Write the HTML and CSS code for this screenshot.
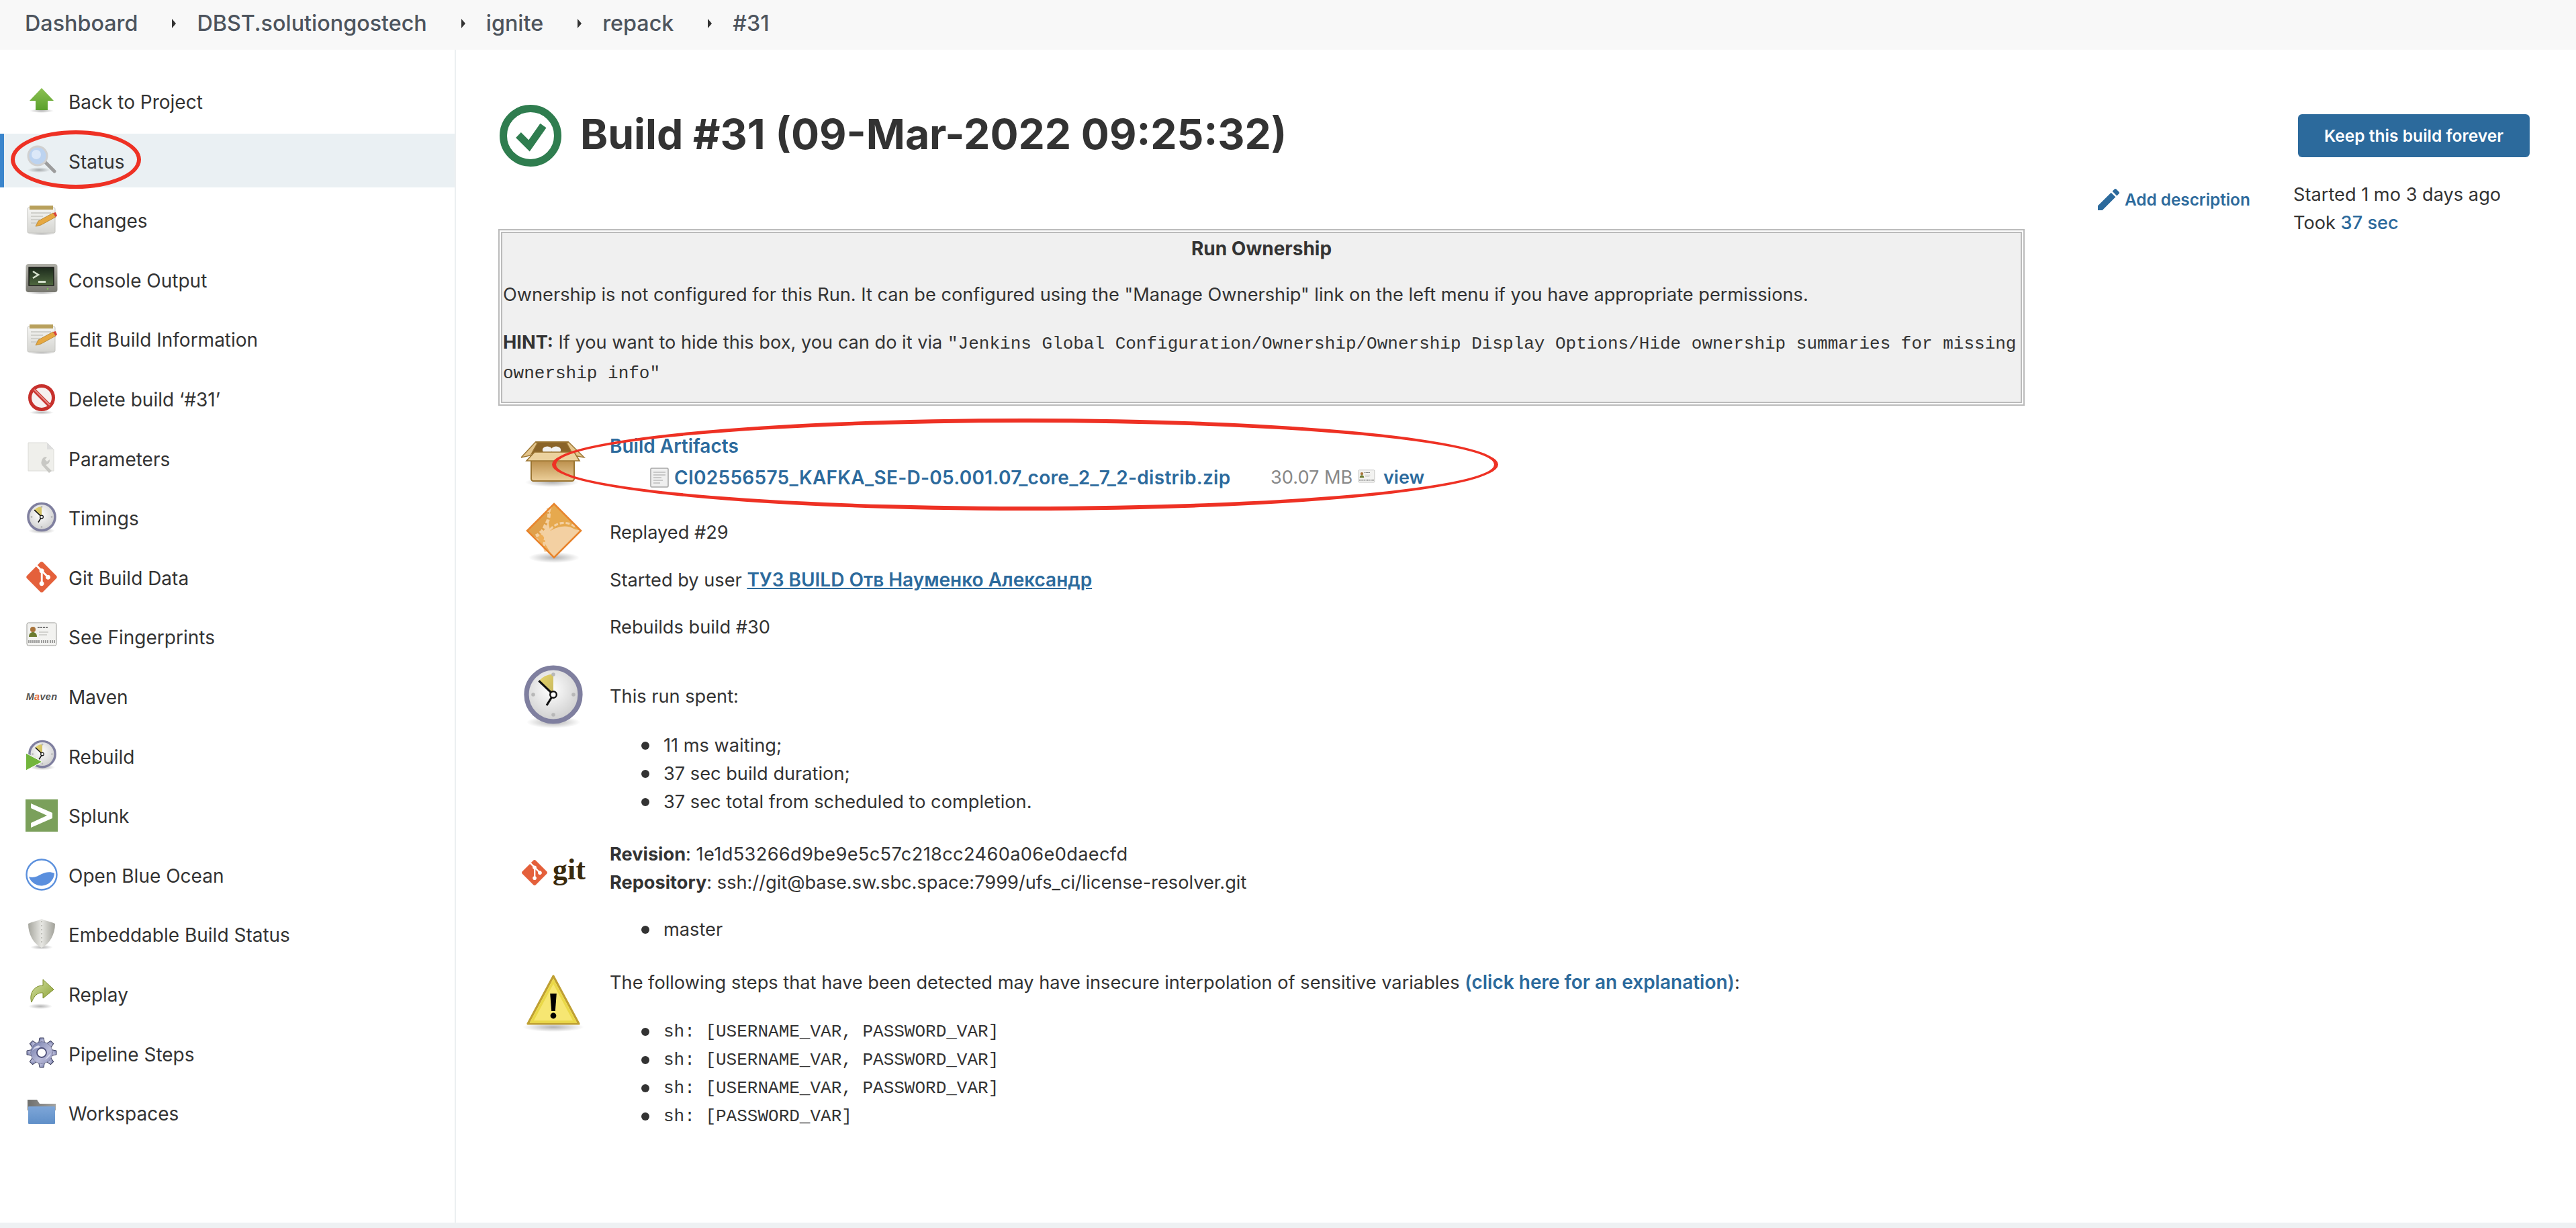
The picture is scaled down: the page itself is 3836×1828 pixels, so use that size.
FILE: index.html
```html
<!DOCTYPE html>
<html lang="en">
<head>
<meta charset="utf-8">
<title>Build #31</title>
<link rel="stylesheet" href="styles.css">
</head>
<body>
<svg class="defs" width="0" height="0" aria-hidden="true">
  <defs>
    <linearGradient id="gGreen" x1="0" y1="0" x2="0" y2="1"><stop offset="0" stop-color="#8cc152"/><stop offset="1" stop-color="#5aa02c"/></linearGradient>
    <linearGradient id="gGrey" x1="0" y1="0" x2="0" y2="1"><stop offset="0" stop-color="#f6f6f4"/><stop offset="1" stop-color="#d4d4d0"/></linearGradient>
    <linearGradient id="gShield" x1="0" y1="0" x2="1" y2="0"><stop offset="0" stop-color="#a6a69e"/><stop offset=".5" stop-color="#e8e8e4"/><stop offset="1" stop-color="#a0a098"/></linearGradient>
    <linearGradient id="gBlue" x1="0" y1="0" x2="0" y2="1"><stop offset="0" stop-color="#7ea6d8"/><stop offset="1" stop-color="#5f8fc8"/></linearGradient>
    <linearGradient id="gFolderBack" x1="0" y1="0" x2="1" y2="0"><stop offset="0" stop-color="#6e6e6c"/><stop offset="1" stop-color="#a4a4a2"/></linearGradient>
    <linearGradient id="gConsole" x1="0" y1="0" x2="0" y2="1"><stop offset="0" stop-color="#b0b0a8"/><stop offset="1" stop-color="#77776f"/></linearGradient>
    <linearGradient id="gScreen" x1="0" y1="0" x2="0" y2="1"><stop offset="0" stop-color="#1c2a1c"/><stop offset="1" stop-color="#4f683f"/></linearGradient>
    <linearGradient id="gGear" x1="0" y1="0" x2="1" y2="1"><stop offset="0" stop-color="#6f78a8"/><stop offset=".6" stop-color="#b8bad8"/><stop offset="1" stop-color="#8f92bc"/></linearGradient>
    <linearGradient id="gReplay" x1="0" y1="0" x2="1" y2="1"><stop offset="0" stop-color="#d6e2a8"/><stop offset="1" stop-color="#8aa030"/></linearGradient>
    <linearGradient id="gBox" x1="0" y1="0" x2="0" y2="1"><stop offset="0" stop-color="#b98c48"/><stop offset="1" stop-color="#eccf9a"/></linearGradient>
    <linearGradient id="gWedge" x1="0" y1="0" x2="1" y2="1"><stop offset="0" stop-color="#e6d56a"/><stop offset="1" stop-color="#c8b860"/></linearGradient>
    <radialGradient id="gFace" cx=".45" cy=".4" r=".7"><stop offset="0" stop-color="#ffffff"/><stop offset="1" stop-color="#c6c6c6"/></radialGradient>
    <radialGradient id="gShadow"><stop offset="0" stop-color="#000" stop-opacity=".3"/><stop offset="1" stop-color="#000" stop-opacity="0"/></radialGradient>
    <clipPath id="clipDiamond"><polygon points="24.5,3 44.5,23 24.5,43 4.5,23"/></clipPath>

    <symbol id="i-up" viewBox="0 0 48 48">
      <ellipse cx="24" cy="38" rx="18" ry="3" fill="url(#gShadow)"/>
      <polygon points="24,4 42,23 33,23 33,37 15,37 15,23 6,23" fill="url(#gGreen)"/>
    </symbol>
    <symbol id="i-search" viewBox="0 0 48 48">
      <ellipse cx="20" cy="38" rx="17" ry="4" fill="url(#gShadow)"/>
      <line x1="30" y1="27" x2="43" y2="40" stroke="#9c9c9c" stroke-width="5" stroke-linecap="round"/>
      <circle cx="18" cy="17" r="14" fill="#bcd3f0" stroke="#d0d0d0" stroke-width="3"/>
      <circle cx="16" cy="15" r="7" fill="#dce8f8"/>
    </symbol>
    <symbol id="i-note" viewBox="0 0 48 48">
      <ellipse cx="24" cy="44" rx="20" ry="2.5" fill="url(#gShadow)"/>
      <rect x="3" y="5" width="41" height="38" rx="2" fill="url(#gGrey)" stroke="#c4c4c0"/>
      <rect x="6" y="2" width="35" height="6" fill="#b8a05c"/>
      <path d="M8 13h30M8 18h18M8 23h14M8 28h12" stroke="#cfcfca" stroke-width="2"/>
      <polygon points="15,33 19,25 41,13 45,19 23,31" fill="#e6a842" stroke="#a87a24" stroke-width=".7"/>
      <polygon points="41,13 45,19 47,17 45,12" fill="#d8443a"/>
    </symbol>
    <symbol id="i-console" viewBox="0 0 48 48">
      <ellipse cx="24" cy="44" rx="22" ry="2.5" fill="url(#gShadow)"/>
      <rect x="0.5" y="1" width="47" height="42" rx="4" fill="url(#gConsole)"/>
      <rect x="5" y="6" width="37" height="27" fill="url(#gScreen)" stroke="#1a1a18" stroke-width="1.4"/>
      <path d="M11 12l8 5-8 5" stroke="#d4e0cc" stroke-width="2.6" fill="none"/>
      <rect x="19" y="26" width="11" height="3" fill="#d4e0cc"/>
      <circle cx="33" cy="38" r="1.2" fill="#7cc850"/>
    </symbol>
    <symbol id="i-delete" viewBox="0 0 48 48">
      <ellipse cx="24" cy="44" rx="18" ry="3" fill="url(#gShadow)"/>
      <circle cx="24" cy="22" r="17.5" fill="#f6f0f0" stroke="#c6302c" stroke-width="5"/>
      <line x1="11.5" y1="9.5" x2="36.5" y2="34.5" stroke="#cc3a36" stroke-width="5.5"/>
      <line x1="13" y1="10" x2="36" y2="33" stroke="#eaa09c" stroke-width="1.4"/>
    </symbol>
    <symbol id="i-params" viewBox="0 0 48 48">
      <path d="M4 1h28l10 10v32H4z" fill="#efefeb" stroke="#dcdcd8"/>
      <path d="M32 1v10h10" fill="#dddddd"/>
      <path d="M24 28a7 7 0 0 1 8-6l-3 4 3 3 4-3a7 7 0 0 1-6 8l9 9-4 3-9-10a7 7 0 0 1-2-8z" fill="#c8c8c4"/>
    </symbol>
    <symbol id="i-clock" viewBox="0 0 48 48">
      <ellipse cx="24" cy="43" rx="20" ry="4.5" fill="url(#gShadow)"/>
      <circle cx="24" cy="22.5" r="20" fill="url(#gFace)" stroke="#7f7f9f" stroke-width="3.6"/>
      <path d="M24 22.5L13.2 12.2A15 15 0 0 1 24 7.2z" fill="url(#gWedge)"/>
      <circle cx="24" cy="7.5" r="1.4" fill="#b8b8b8"/><circle cx="39" cy="22.5" r="1.4" fill="#b8b8b8"/><circle cx="24" cy="37.5" r="1.4" fill="#b8b8b8"/><circle cx="9" cy="22.5" r="1.4" fill="#b8b8b8"/>
      <path d="M13.2 12.2L24 22.5L19 30.5" stroke="#111" stroke-width="1.6" fill="none"/>
      <circle cx="24" cy="22.5" r="2.4" fill="#fff" stroke="#111" stroke-width="1.2"/>
    </symbol>
    <symbol id="i-git" viewBox="0 0 97 97">
      <path fill="#e4603b" d="M92.71 44.408L52.591 4.291c-2.31-2.311-6.057-2.311-8.369 0l-8.33 8.332L46.459 23.19c2.456-.83 5.272-.273 7.229 1.685 1.969 1.97 2.521 4.81 1.67 7.275l10.186 10.185c2.465-.85 5.307-.3 7.275 1.671 2.75 2.75 2.75 7.206 0 9.958-2.752 2.751-7.208 2.751-9.961 0-2.068-2.07-2.58-5.11-1.531-7.658l-9.5-9.499v24.997c.67.332 1.303.774 1.861 1.332 2.75 2.75 2.75 7.206 0 9.959-2.75 2.749-7.209 2.749-9.957 0-2.75-2.754-2.75-7.21 0-9.959.68-.679 1.467-1.193 2.307-1.537v-25.23c-.84-.344-1.625-.853-2.307-1.537-2.083-2.082-2.584-5.14-1.516-7.698L31.798 16.715 4.288 44.222c-2.311 2.313-2.311 6.06 0 8.371l40.121 40.118c2.31 2.311 6.056 2.311 8.369 0L92.71 52.779c2.311-2.311 2.311-6.06 0-8.371z"/>
    </symbol>
    <symbol id="i-card" viewBox="0 0 48 48">
      <rect x="2" y="3" width="44" height="34" rx="2.5" fill="#f2f2f0" stroke="#9a9a96"/>
      <circle cx="11" cy="13" r="4" fill="#a8743c"/>
      <path d="M5 24c0-5 3-7 6-7s6 2 6 7z" fill="#6c7c30"/>
      <path d="M20 17h14M20 21h12" stroke="#c8c8c4" stroke-width="1.4"/>
      <path d="M18 10h16" stroke="#777" stroke-width="2" stroke-dasharray="3 1"/>
      <path d="M5 29v4M8 29v4M11 29v4M14 29v4M17 29v4M20 29v4M24 29v4M27 29v4M30 29v4M33 29v4M37 29v4M40 29v4M43 29v4" stroke="#666" stroke-width="1.2"/>
    </symbol>
    <symbol id="i-maven" viewBox="0 0 48 48">
      <text x="24" y="29" text-anchor="middle" class="maven-text">M<tspan class="maven-a">a</tspan>ven</text>
    </symbol>
    <symbol id="i-rebuild" viewBox="0 0 48 48">
      <use href="#i-clock" width="46" height="46" x="2" y="0"/>
      <polygon points="0.5,20 25,33 0.5,46" fill="#72b53c" stroke="#fff" stroke-width="1"/>
    </symbol>
    <symbol id="i-splunk" viewBox="0 0 48 48">
      <rect width="48" height="48" fill="#7ba05b"/>
      <polygon points="8,6 40,20 40,28 8,42 8,35 32,24 8,13" fill="#fff"/>
    </symbol>
    <symbol id="i-ocean" viewBox="0 0 48 48">
      <circle cx="24" cy="24" r="22.5" fill="#fff" stroke="#5b90dd" stroke-width="2.4"/>
      <path d="M5 27C12 30 18 26 24 23C30 20 37 19 43 22A19.5 19.5 0 0 1 5 27z" fill="#5a8fde"/>
    </symbol>
    <symbol id="i-shield" viewBox="0 0 48 48">
      <ellipse cx="24" cy="43" rx="17" ry="3.5" fill="url(#gShadow)"/>
      <path d="M24 1C30 4 38 5 44 8C44 24 36 38 24 44C12 38 4 24 4 8C10 5 18 4 24 1z" fill="url(#gShield)"/>
      <path d="M24 4v36" stroke="#b0b0a8" stroke-width="1.4" stroke-dasharray="2 4"/>
    </symbol>
    <symbol id="i-replay" viewBox="0 0 48 48">
      <ellipse cx="22" cy="42" rx="18" ry="4" fill="url(#gShadow)"/>
      <path d="M9 36C5 24 12 11 26 11L26 2L42 17L26 30L26 22C18 21 13 26 9 36z" fill="url(#gReplay)" stroke="#7c8c2a"/>
    </symbol>
    <symbol id="i-gear" viewBox="0 0 48 48">
      <g fill="url(#gGear)" stroke="#3c3e5c" stroke-width="1">
        <polygon points="19.5,9 21,1 27,1 28.5,9"/>
        <polygon points="19.5,9 21,1 27,1 28.5,9" transform="rotate(45 24 23)"/>
        <polygon points="19.5,9 21,1 27,1 28.5,9" transform="rotate(90 24 23)"/>
        <polygon points="19.5,9 21,1 27,1 28.5,9" transform="rotate(135 24 23)"/>
        <polygon points="19.5,9 21,1 27,1 28.5,9" transform="rotate(180 24 23)"/>
        <polygon points="19.5,9 21,1 27,1 28.5,9" transform="rotate(225 24 23)"/>
        <polygon points="19.5,9 21,1 27,1 28.5,9" transform="rotate(270 24 23)"/>
        <polygon points="19.5,9 21,1 27,1 28.5,9" transform="rotate(315 24 23)"/>
        <circle cx="24" cy="23" r="16"/>
      </g>
      <circle cx="24" cy="23" r="16" fill="url(#gGear)"/>
      <path d="M10 20C16 14 18 18 22 14C20 11 14 12 10 20zM28 34C32 32 36 30 38 24C35 25 32 30 28 34z" fill="#d6d8ec"/>
      <circle cx="24" cy="23" r="7" fill="#fff" stroke="#4c4e78" stroke-width="1.8"/>
    </symbol>
    <symbol id="i-folder" viewBox="0 0 48 48">
      <path d="M3 4h14l4 6h24v10H3z" fill="url(#gFolderBack)"/>
      <rect x="4" y="14" width="40" height="26" rx="1" fill="url(#gBlue)"/>
    </symbol>
    <symbol id="i-box" viewBox="0 0 48 48">
      <ellipse cx="23" cy="38" rx="20" ry="3.5" fill="url(#gShadow)"/>
      <polygon points="10.7,8 35.3,8 39,20 7,20" fill="#8a6428"/>
      <ellipse cx="19.5" cy="14" rx="3.6" ry="2.8" fill="#f2f2f2"/><ellipse cx="26" cy="14" rx="3.6" ry="2.8" fill="#f2f2f2"/>
      <polygon points="0,19.5 10.7,8 12,9 7,18" fill="#e4c58c" stroke="#9a7430" stroke-width=".7"/>
      <polygon points="47,19.5 35.3,8 34,9 39,18" fill="#e4c58c" stroke="#9a7430" stroke-width=".7"/>
      <path d="M10.7 8h24.6" stroke="#9a7430" stroke-width="1"/>
      <rect x="7.5" y="21" width="32" height="16" rx="1.6" fill="url(#gBox)" stroke="#9a7430"/>
      <polygon points="4,22 43.5,22 39.5,15.5 10,15.5" fill="#ecd29e" stroke="#9a7430" stroke-width=".8"/>
    </symbol>
    <symbol id="i-replayed" viewBox="0 0 48 48">
      <ellipse cx="24.5" cy="43" rx="19" ry="4" fill="url(#gShadow)"/>
      <polygon points="24.5,3 44.5,23 24.5,43 4.5,23" fill="#f3d0a2"/>
      <g clip-path="url(#clipDiamond)">
        <path d="M4 23L20 4C22 12 21 20 12 29z" fill="#e0a04a"/>
        <path d="M24 3L46 23L40 22C34 18 27 20 22 23C19 17 21 9 24 3z" fill="#e6a94e"/>
        <path d="M11 26C16 24 18 28 18 33L24 43L14 32z" fill="#eeae58"/>
      </g>
      <path d="M20 6a14 14 0 0 1-2 13a14 14 0 0 1-7 8" stroke="#f3d0a2" stroke-width="2.4" fill="none" stroke-dasharray="3 1.4"/>
      <path d="M40 20a13 13 0 0 0-20 5a13 13 0 0 0-1 15" stroke="#f3d0a2" stroke-width="1.6" fill="none" stroke-dasharray="3 1.4"/>
      <polygon points="24.5,3 44.5,23 24.5,43 4.5,23" fill="none" stroke="#e8842c" stroke-width="1.3"/>
    </symbol>
    <symbol id="i-warning" viewBox="0 0 48 48">
      <ellipse cx="24" cy="42" rx="23" ry="3.5" fill="url(#gShadow)"/>
      <polygon points="24,4 43,39.5 5,39.5" fill="#f6e672" stroke="#bfa032" stroke-width="1.6" stroke-linejoin="round"/>
      <polygon points="24,8 40,38 8,38" fill="none" stroke="#ead848" stroke-width="1.8"/>
      <polygon points="21.6,17 26.4,17 25.4,30 22.6,30" fill="#000"/>
      <circle cx="24" cy="33.5" r="2.2" fill="#000"/>
    </symbol>
  </defs>
</svg>

<header class="crumbs">
  <a class="crumb">Dashboard</a><i class="arrow"></i>
  <a class="crumb">DBST.solutiongostech</a><i class="arrow"></i>
  <a class="crumb">ignite</a><i class="arrow"></i>
  <a class="crumb">repack</a><i class="arrow"></i>
  <a class="crumb">#31</a>
</header>

<div class="layout">
  <nav class="side">
    <a class="task"><svg class="ticon"><use href="#i-up"/></svg>Back to Project</a>
    <a class="task active"><svg class="ticon"><use href="#i-search"/></svg>Status</a>
    <a class="task"><svg class="ticon"><use href="#i-note"/></svg>Changes</a>
    <a class="task"><svg class="ticon"><use href="#i-console"/></svg>Console Output</a>
    <a class="task"><svg class="ticon"><use href="#i-note"/></svg>Edit Build Information</a>
    <a class="task"><svg class="ticon"><use href="#i-delete"/></svg>Delete build ‘#31’</a>
    <a class="task"><svg class="ticon"><use href="#i-params"/></svg>Parameters</a>
    <a class="task"><svg class="ticon"><use href="#i-clock"/></svg>Timings</a>
    <a class="task"><svg class="ticon"><use href="#i-git"/></svg>Git Build Data</a>
    <a class="task"><svg class="ticon"><use href="#i-card"/></svg>See Fingerprints</a>
    <a class="task"><svg class="ticon"><use href="#i-maven"/></svg>Maven</a>
    <a class="task"><svg class="ticon"><use href="#i-rebuild"/></svg>Rebuild</a>
    <a class="task"><svg class="ticon"><use href="#i-splunk"/></svg>Splunk</a>
    <a class="task"><svg class="ticon"><use href="#i-ocean"/></svg>Open Blue Ocean</a>
    <a class="task"><svg class="ticon"><use href="#i-shield"/></svg>Embeddable Build Status</a>
    <a class="task"><svg class="ticon"><use href="#i-replay"/></svg>Replay</a>
    <a class="task"><svg class="ticon"><use href="#i-gear"/></svg>Pipeline Steps</a>
    <a class="task"><svg class="ticon"><use href="#i-folder"/></svg>Workspaces</a>
  </nav>

  <main class="main">
    <div class="col">
      <h1 class="title">
        <svg class="check" viewBox="0 0 92 92"><circle cx="46" cy="46" r="40.5" fill="none" stroke="#2f7d4f" stroke-width="11"/><polyline points="28,45 44,61 65,31" fill="none" stroke="#2f7d4f" stroke-width="11"/></svg>
        <span class="title-text">Build #31 (09-Mar-2022 09:25:32)</span>
      </h1>

      <div class="own-outer">
        <div class="own">
          <div class="own-head">Run Ownership</div>
          <p class="own-p1">Ownership is not configured for this Run. It can be configured using the "Manage Ownership" link on the left menu if you have appropriate permissions.</p>
          <p class="own-p2"><b>HINT:</b> If you want to hide this box, you can do it via <span class="mono">"Jenkins Global Configuration/Ownership/Ownership Display Options/Hide ownership summaries for missing</span><br><span class="mono">ownership info"</span></p>
        </div>
      </div>

      <section class="row row-art">
        <svg class="bigicon"><use href="#i-box"/></svg>
        <div class="body">
          <a class="link strong">Build Artifacts</a>
          <div class="file">
            <svg class="fileicon" viewBox="0 0 28 30"><rect x="1" y="1" width="26" height="28" rx="1.5" fill="#efefef" stroke="#a8a8a8" stroke-width="1.6"/><path d="M5 7h18M5 11h18M5 15h12M5 19h14M5 23h10" stroke="#c8c8c8" stroke-width="2"/></svg>
            <a class="link strong fname">CI02556575_KAFKA_SE-D-05.001.07_core_2_7_2-distrib.zip</a>
            <span class="size">30.07 MB</span>
            <svg class="cardicon"><use href="#i-card"/></svg>
            <a class="link strong view">view</a>
          </div>
        </div>
      </section>

      <section class="row row-replay">
        <svg class="bigicon"><use href="#i-replayed"/></svg>
        <div class="body pad28">
          <div>Replayed #29</div>
          <div class="gap28">Started by user <a class="link strong under">ТУЗ BUILD Отв Науменко Александр</a></div>
          <div class="gap28">Rebuilds build #30</div>
        </div>
      </section>

      <section class="row row-clock">
        <svg class="bigicon"><use href="#i-clock"/></svg>
        <div class="body pad28">
          <div>This run spent:</div>
          <ul class="list list-time">
            <li>11 ms waiting;</li>
            <li>37 sec build duration;</li>
            <li>37 sec total from scheduled to completion.</li>
          </ul>
        </div>
      </section>

      <section class="row row-git">
        <svg class="bigicon" viewBox="0 0 96 96"><use href="#i-git" x="0" y="28" width="40" height="40"/><text x="47" y="58" class="git-text">git</text></svg>
        <div class="body">
          <div><b>Revision</b>: <span class="hash">1e1d53266d9be9e5c57c218cc2460a06e0daecfd</span></div>
          <div><b>Repository</b>: ssh://git@base.sw.sbc.space:7999/ufs_ci/license-resolver.git</div>
          <ul class="list"><li>master</li></ul>
        </div>
      </section>

      <section class="row row-warn">
        <svg class="bigicon warn"><use href="#i-warning"/></svg>
        <div class="body">
          <div class="nowrap">The following steps that have been detected may have insecure interpolation of sensitive variables <a class="link strong">(click here for an explanation)</a>:</div>
          <ul class="list list-mono">
            <li>sh: [USERNAME_VAR, PASSWORD_VAR]</li>
            <li>sh: [USERNAME_VAR, PASSWORD_VAR]</li>
            <li>sh: [USERNAME_VAR, PASSWORD_VAR]</li>
            <li>sh: [PASSWORD_VAR]</li>
          </ul>
        </div>
      </section>
    </div>

    <aside class="meta">
      <button class="keep">Keep this build forever</button>
      <div class="meta-row">
        <a class="link strong add"><svg class="pencil" viewBox="3 3 18 18"><path fill="#2c6a9c" d="M3 17.25V21h3.75L17.81 9.94l-3.75-3.75L3 17.25zM20.71 7.04c.39-.39.39-1.02 0-1.41l-2.34-2.34c-.39-.39-1.02-.39-1.41 0l-1.83 1.83 3.75 3.75 1.83-1.83z"/></svg>Add description</a>
        <div class="times">
          <div>Started 1 mo 3 days ago</div>
          <div>Took <a class="link medium">37 sec</a></div>
        </div>
      </div>
    </aside>
  </main>
</div>
<footer class="foot"></footer>

<div class="mark mark-status"></div>
<div class="mark mark-art"></div>
</body>
</html>
```
FILE: styles.css
```css
* { box-sizing: border-box; }
html, body { margin: 0; height: 100%; }
body {
  display: flex;
  flex-direction: column;
  height: 1828px;
  overflow: hidden;
  position: relative;
  background: #fff;
  color: #333;
  font-family: Inter, "Noto Sans", sans-serif;
  font-size: 27.2px;
  line-height: 42px;
}
.defs { position: absolute; }
.crumbs {
  height: 74px;
  flex: none;
  display: flex;
  align-items: center;
  padding: 0 0 4px 37px;
  background: #f8f8f8;
  color: #4d545d;
  font-size: 32.3px;
  font-weight: 500;
}
.arrow {
  width: 0;
  height: 0;
  margin: 0 31px 0 51px;
  border-left: 6px solid #333;
  border-top: 7px solid transparent;
  border-bottom: 7px solid transparent;
}
.layout { flex: 1; display: flex; min-height: 0; }
.side {
  width: 679px;
  flex: none;
  border-right: 2px solid #eceff1;
  padding-top: 36.6px;
  display: flex;
  flex-direction: column;
  gap: 8.6px;
}
.task {
  height: 80px;
  display: flex;
  align-items: center;
  gap: 16px;
  padding: 3px 0 0 38px;
  font-size: 28px;
  color: #333;
}
.task.active { background: #eaf0f3; box-shadow: inset 6px 0 0 #3a85cc; }
.ticon { width: 48px; height: 48px; flex: none; margin-top: -3px; }
.maven-text { font: italic bold 14.5px "Liberation Sans", sans-serif; fill: #555; letter-spacing: .3px; }
.maven-a { fill: #e07040; }
.main { flex: 1; display: flex; padding-left: 63px; padding-right: 69px; min-width: 0; }
.col { width: 2273px; flex: none; padding-top: 83px; }
.title {
  margin: 0 0 94px;
  height: 90px;
  display: flex;
  align-items: center;
  gap: 28px;
  padding-left: 2px;
  font-size: 62.4px;
  line-height: 90px;
  font-weight: 700;
  color: #333;
  white-space: nowrap;
}
.title-text { margin-bottom: 4px; }
.check { width: 92px; height: 92px; flex: none; }
.own-outer { height: 263px; border: 2px solid #bbb; padding: 2px; background: #fff; }
.own { height: 100%; border: 2px solid #bbb; background: #f0f0f0; padding: 0 1px; }
.own-head { margin-top: 2px; text-align: center; font-weight: 700; font-size: 28px; }
.own-p1 { margin: 27px 0 0; white-space: nowrap; }
.own-p2 { margin: 29px 0 0; white-space: nowrap; }
.mono, .list-mono { font-family: "Liberation Mono", monospace; font-size: 26px; }
.row { display: flex; padding-left: 34px; }
.bigicon { width: 96px; height: 96px; flex: none; margin-right: 36px; }
.body { min-width: 0; flex: 1; }
.pad28 { padding-top: 28px; }
.gap28 { margin-top: 28px; }
.row-art { margin-top: 39px; height: 90px; }
.row-art .bigicon { margin-top: -1px; }
.row-replay { margin-top: 11px; }
.row-clock { margin-top: 34px; }
.row-clock .pad28 { padding-top: 27px; }
.row-git { margin-top: 36px; }
.row-warn { margin-top: 36px; }
.warn { margin-top: 4px; }
.nowrap { white-space: nowrap; }
.hash { letter-spacing: .35px; }
.link { color: #2c6a9c; text-decoration: none; }
.strong { font-weight: 600; font-size: 28px; }
.view { font-size: 27px; }
.medium { font-weight: 500; }
.under { text-decoration: underline; }
.file { display: flex; align-items: center; height: 46px; margin-top: 2px; padding-left: 60px; }
.fileicon { width: 28px; height: 30px; flex: none; margin-right: 8px; }
.fname { width: 888px; flex: none; white-space: nowrap; letter-spacing: .3px; }
.size { color: #888; width: 130px; flex: none; white-space: nowrap; }
.cardicon { width: 26px; height: 26px; flex: none; margin-right: 12px; }
.list { margin: 29px 0 0; padding: 0 0 0 47px; list-style: none; }
.list li { display: flex; align-items: center; white-space: pre; }
.list li::before {
  content: "";
  width: 12px;
  height: 12px;
  flex: none;
  margin-right: 21px;
  border-radius: 50%;
  background: #333;
}
.list-time { margin-top: 31px; }
.row-git .list { margin-top: 28px; }
.list-mono { margin-top: 31px; }
.meta { flex: 1; min-width: 0; display: flex; flex-direction: column; align-items: flex-end; padding-top: 96px; margin-left: 109px; }
.keep {
  width: 345px;
  height: 64px;
  border: 0;
  border-radius: 6px;
  background: #2c6a9c;
  color: #fff;
  font: 600 24.6px Inter, sans-serif;
}
.meta-row { width: 100%; margin-top: 35px; display: flex; align-items: flex-start; }
.add {
  width: 291px;
  flex: none;
  display: flex;
  align-items: center;
  gap: 8px;
  margin-top: 7px;
  font-size: 24.3px;
  white-space: nowrap;
}
.pencil { width: 32px; height: 32px; flex: none; }
.times { white-space: nowrap; }
.git-text { font: bold 44px "Liberation Serif", serif; fill: #3a2a0c; }
.foot { height: 8px; flex: none; background: #eef1f3; }
.mark { position: absolute; border: 6px solid #ee3124; border-radius: 50%; pointer-events: none; }
.mark-status { left: 16px; top: 194px; width: 194px; height: 87px; }
.mark-art { left: 822px; top: 623px; width: 1409px; height: 137px; }
```
